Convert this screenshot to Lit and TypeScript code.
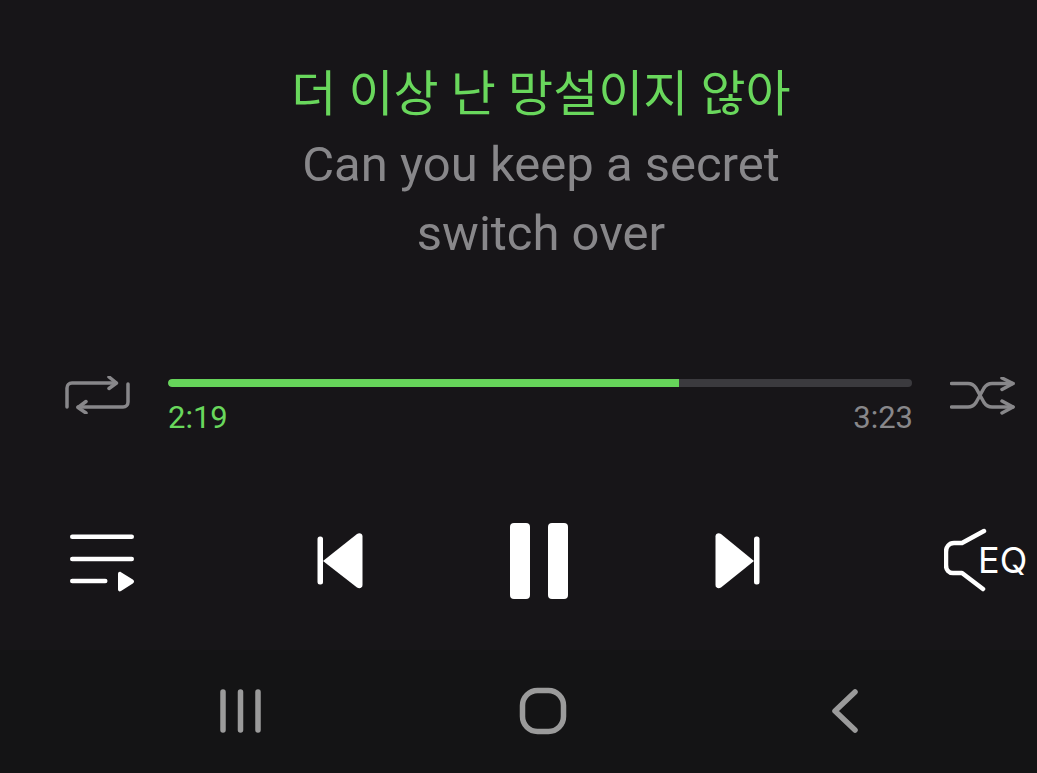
import { LitElement, html, css, svg } from "lit";
import { customElement, state } from "lit/decorators.js";

const repeatIcon = svg`
  <path d="M2 31V12C2 9 4 7 7 7H51" />
  <path d="M44 1L51.5 7L44 12.500" />
  <path d="M63 8V26C63 29 61 31 58 31H13" />
  <path d="M21 25.500L13 31.500L21 37" />
`;

const shuffleIcon = svg`
  <path d="M1.500 6.500H18C22 6.500 24 8 26 11L34 25.500C36 28.500 38 30 42 30H63" />
  <path d="M1.500 30H18C22 30 24 28.500 26 25.500L34 11C36 8 38 6.500 42 6.500H63" />
  <path d="M52 1L63 6.500L52 12.500" />
  <path d="M52 24L63 30L52 36" />
`;

@customElement("app-root")
export class AppRoot extends LitElement {
  @state() private _elapsed = "2:19";
  @state() private _total = "3:23";
  @state() private _progress = 68.7;

  static styles = css`
    :host {
      display: flex;
      flex-direction: column;
      width: 1037px;
      height: 773px;
      overflow: hidden;
      background: #171518;
      font-family: Roboto, "Noto Sans CJK KR", sans-serif;
    }
    .lyrics {
      display: flex;
      flex-direction: column;
      align-items: center;
      flex: none;
      height: 376px;
      padding: 60px 0 0 45px;
      box-sizing: border-box;
      font-size: 49px;
      line-height: 69.5px;
      color: #88878a;
    }
    .current {
      color: #69d75c;
    }
    .seek {
      display: grid;
      grid-template-columns: 65px 744px 66px;
      column-gap: 38px;
      flex: none;
      height: 111px;
      padding-left: 65px;
      box-sizing: border-box;
    }
    .seek svg {
      display: block;
      fill: none;
      stroke: #88878a;
      stroke-width: 3.5;
      stroke-linecap: round;
      stroke-linejoin: round;
    }
    .shuffle {
      margin-top: 1px;
    }
    .track {
      height: 8px;
      margin-top: 3px;
      border-radius: 4px;
      background: #3b3a3e;
      overflow: hidden;
    }
    .fill {
      height: 100%;
      background: #66d45a;
      border-radius: 4px 0 0 4px;
    }
    .times {
      display: flex;
      justify-content: space-between;
      margin: 14px -1px 0 0;
      font-size: 31px;
      line-height: 34px;
      color: #88878a;
    }
    .times .now {
      color: #69d75c;
    }
    .controls {
      flex: 1;
      display: flex;
      align-items: center;
      padding: 0 0 15px 70px;
    }
    .controls svg {
      display: block;
      flex: none;
      fill: #fff;
    }
    .prev {
      margin-left: 182px;
    }
    .pause {
      margin: 0 147px;
    }
    .eq {
      margin-left: 183px;
    }
    .eq .horn {
      fill: none;
      stroke: #fff;
      stroke-width: 4.5;
      stroke-linecap: round;
      stroke-linejoin: round;
    }
    .eq text {
      font-family: Inter, sans-serif;
      font-size: 36px;
    }
    .navbar {
      flex: none;
      height: 123px;
      background: #141415;
    }
    .navbar svg {
      display: block;
      fill: none;
      stroke: #9b9b9b;
      stroke-width: 5.5;
      stroke-linecap: round;
      stroke-linejoin: round;
    }
  `;

  render() {
    return html`
      <section class="lyrics">
        <div class="current">더 이상 난 망설이지 않아</div>
        <div>Can you keep a secret</div>
        <div>switch over</div>
      </section>

      <section class="seek">
        <svg width="65" height="38" viewBox="0 0 65 38">${repeatIcon}</svg>
        <div>
          <div class="track">
            <div class="fill" style="width: ${this._progress}%"></div>
          </div>
          <div class="times">
            <span class="now">${this._elapsed}</span>
            <span>${this._total}</span>
          </div>
        </div>
        <svg class="shuffle" width="66" height="38" viewBox="0 0 66 38">${shuffleIcon}</svg>
      </section>

      <section class="controls">
        <svg width="65" height="66" viewBox="0 0 65 66">
          <rect x="0" y="6.500" width="64" height="4.500" rx="2.250" />
          <rect x="0" y="28.800" width="64" height="4.500" rx="2.250" />
          <rect x="0" y="50.800" width="37.500" height="4.500" rx="2.250" />
          <path d="M48 46C48 44.200 49.500 43.300 51 44.200L62.800 51.500C64.500 52.700 64.500 54.300 62.800 55.500L51 63C49.500 64 48 63 48 61.500Z" />
        </svg>

        <svg class="prev" width="46" height="56" viewBox="0 0 46 56">
          <rect x="0.500" y="3.500" width="5.500" height="48" rx="2.500" />
          <path d="M6 28L40 1C42.500 -0.500 45.500 0.500 45.500 3.500V52C45.500 55 42.500 56 40 54.500Z" />
        </svg>
        <svg class="pause" width="58" height="76" viewBox="0 0 58 76">
          <rect x="0" y="0" width="20" height="76" rx="4" />
          <rect x="38" y="0" width="20" height="76" rx="4" />
        </svg>
        <svg width="46" height="56" viewBox="0 0 46 56">
          <rect x="39" y="3.500" width="5.500" height="48" rx="2.500" />
          <path d="M39 28L6 1C3.500 -0.500 0.500 0.500 0.500 3.500V52C0.500 55 3.500 56 6 54.500Z" />
        </svg>

        <svg class="eq" width="85" height="66" viewBox="0 0 85 66">
          <path class="horn" d="M40 3L18 15H10C5 15 2 19 2 24V37C2 42 5 45 9 45H18L39 61" />
          <text x="34" y="45">EQ</text>
        </svg>
      </section>

      <nav class="navbar">
        <svg width="1037" height="123" viewBox="0 0 1037 123">
          <path d="M223 42V80M240.500 42V80M258 42V80" />
          <rect x="522.500" y="40.500" width="41" height="41" rx="15" />
          <path d="M855 42L835 61L855 80" />
        </svg>
      </nav>
    `;
  }
}
